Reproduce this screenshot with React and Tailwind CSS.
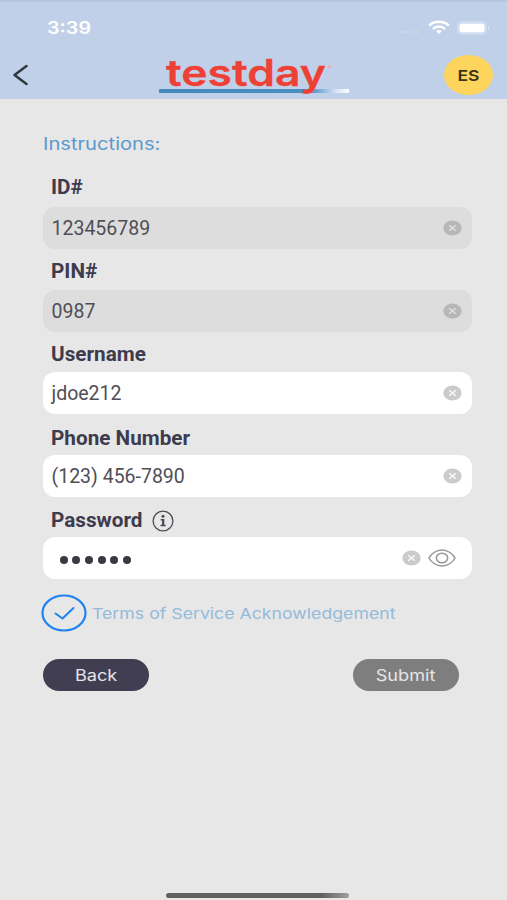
const fields = [
  { label: 'ID#', value: '123456789', disabled: true, shift: 'pt-[2px]' },
  { label: 'PIN#', value: '0987', disabled: true, shift: 'pt-[4px]' },
  { label: 'Username', value: 'jdoe212', shift: 'pt-[5px]' },
  { label: 'Phone Number', value: '(123) 456-7890', shift: 'pt-[7px]' },
  { label: 'Password', value: '', secret: true, shift: 'pt-[7px]' },
]

const ClearIcon = ({ dark }) => (
  <svg className={dark ? 'text-[#b7b7b7]' : 'text-[#cbcbcb]'} width="19" height="16" viewBox="0 0 19 16">
    <ellipse cx="9.5" cy="8" rx="9.2" ry="7.6" fill="currentColor" />
    <path d="M6.2 5.2l6.6 5.6M12.8 5.2l-6.6 5.6" stroke={dark ? '#e0e0e0' : '#fafafa'} strokeWidth="1.5" />
  </svg>
)

const EyeIcon = () => (
  <svg width="28" height="18" viewBox="0 0 28 18" fill="none" stroke="#969696" strokeWidth="1.5">
    <path d="M1 9C3 5 8 1 14 1s11 4 13 8c-2 4-7 8-13 8S3 13 1 9z" />
    <ellipse cx="14" cy="9" rx="5.700" ry="4.700" />
  </svg>
)

const InfoIcon = () => (
  <svg width="22" height="22" viewBox="0 0 22 22" fill="none" stroke="#4b4b52">
    <circle cx="11" cy="11" r="9.900" strokeWidth="1.3" />
    <circle cx="11" cy="6.300" r="1.500" fill="#4b4b52" stroke="none" />
    <path d="M8.700 9.700h2.500v5.800" strokeWidth="1.500" />
    <path d="M11.200 9v6.500" strokeWidth="2.200" />
    <path d="M8.500 15.500h5.200" strokeWidth="1.500" />
  </svg>
)

const Logo = () => (
  <svg className="overflow-visible" width="192" height="46" viewBox="0 0 192 46">
    <defs>
      <linearGradient id="line" x1="0" x2="1" y1="0" y2="0">
        <stop offset="0" stopColor="#4389bd" />
        <stop offset="0.800" stopColor="#4a8fc4" />
        <stop offset="0.930" stopColor="#d3e2f1" />
        <stop offset="1" stopColor="#ffffff" />
      </linearGradient>
    </defs>
    <rect x="1" y="37" width="190" height="4" rx="1" fill="url(#line)" />
    <text x="8" y="34" textLength="160" lengthAdjust="spacingAndGlyphs" fontFamily="Inter, sans-serif" fontSize="37" fontWeight="600" fill="#ee4136" stroke="#ee4136" strokeWidth="0.3">testday</text>
    <circle cx="171.500" cy="14.500" r="1.500" fill="#eba9b0" />
  </svg>
)

const Header = () => (
  <header className="h-[99px] bg-[#c0d0e8] border-t-2 border-[#b5c5e0]">
    <div className="flex h-[50px] items-center justify-between pl-[47px] pr-[17px] text-white">
      <span className="mt-[4px] origin-left scale-x-[1.16] font-[Inter] text-[17px] font-semibold">3:39</span>
      <div className="flex items-center pt-[1px]">
        <div className="mt-2 mr-[9px] flex gap-[2px]">
          {[0, 1, 2, 3].map((i) => <i key={i} className="h-[2px] w-[3px] rounded-full bg-[#cddaed]" />)}
        </div>
        <svg width="22" height="15" viewBox="0 0 22 15" fill="none" stroke="white" strokeWidth="2.500">
          <path d="M1.200 5.500C6.500.400 15.500.400 20.800 5.500" />
          <path d="M5 8.900c3.400-3.300 8.600-3.300 12 0" />
          <path d="M8 11l3 3 3-3c-1.800-1.500-4.200-1.500-6 0z" fill="white" stroke="none" />
        </svg>
        <svg className="ml-[7px]" width="33" height="14" viewBox="0 0 33 14">
          <rect x="0.700" y="0.700" width="28.500" height="12.600" rx="4" fill="#cfdcef" stroke="#d3dff0" />
          <rect x="2.500" y="2.700" width="25" height="8.600" rx="2" fill="white" />
          <path d="M31 5q2 2 0 4z" fill="#e4ecf7" />
        </svg>
      </div>
    </div>
    <div className="flex h-[46px] items-center justify-between pl-[12px] pr-[14px]">
      <svg className="mr-[33px]" width="18" height="22" viewBox="0 0 18 22" fill="none" stroke="#30393f" strokeWidth="2.600" strokeLinecap="round" strokeLinejoin="round">
        <path d="M14.500 2L2.500 11l12 9" />
      </svg>
      <Logo />
      <button className="h-10 w-[49px] rounded-[50%] bg-[#fdd45c] font-[Inter] text-[#3a3217]">
        <span className="inline-block scale-x-[1.17] text-[15px] font-semibold">ES</span>
      </button>
    </div>
  </header>
)

const Field = ({ label, value, disabled, secret, shift }) => (
  <div className="h-[82.600px]">
    <label className={`flex h-[40.600px] items-center gap-[10px] pl-[8px] text-[20.500px] font-bold text-[#3d3b4d] ${shift}`}>
      <span className="origin-left scale-x-[1.01]">{label}</span>
      {secret && <InfoIcon />}
    </label>
    <div className={`flex h-[42px] items-center justify-between rounded-[12px] pl-[8.500px] ${disabled ? 'bg-[#dddddd]' : 'bg-white'} ${secret ? 'pr-[16px]' : 'pr-[10px]'}`}>
      {secret ? (
        <div className="flex gap-[4.500px] pt-[3px] pl-[8px]">
          {[0, 1, 2, 3, 4, 5].map((i) => <i key={i} className="h-[8.200px] w-[8.200px] rounded-full bg-[#3b3a43]" />)}
        </div>
      ) : (
        <span className="pt-[1px] text-[19.500px] text-[#4f4e56]">{value}</span>
      )}
      <div className="flex items-center gap-[7px]">
        <ClearIcon dark={disabled} />
        {secret && <EyeIcon />}
      </div>
    </div>
  </div>
)

export default function App() {
  return (
    <div className="flex h-[900px] w-[507px] flex-col bg-[#e7e7e7] font-[Roboto]">
      <Header />
      <main className="flex-1 pt-[33px] pr-[35px] pl-[43px]">
        <p className="h-[34.500px] font-[Inter] text-[17px] leading-[24px] text-[#5b98cb]">
          <span className="inline-block origin-left scale-x-[1.185]">Instructions:</span>
        </p>
        {fields.map((f) => <Field key={f.label} {...f} />)}
        <div className="mt-[15px] -ml-[2px] flex h-[38px] items-center gap-[5px] font-[Inter]">
          <svg width="46" height="38" viewBox="0 0 46 38" fill="none" stroke="#1f82f2" strokeLinecap="round" strokeLinejoin="round">
            <ellipse cx="23" cy="19" rx="21.500" ry="17.500" strokeWidth="2.200" />
            <path d="M14.500 19.500l7 5 11-10.500" strokeWidth="2" />
          </svg>
          <span className="origin-left scale-x-[1.18] pt-[2px] text-[15px] whitespace-nowrap text-[#94bbdb]">Terms of Service Acknowledgement</span>
        </div>
        <div className="mt-[27px] flex justify-between pr-[13px] font-[Inter] text-[15.500px] text-[#e5e5e8]">
          <button className="h-8 w-[106px] rounded-full bg-[#413e52]"><span className="inline-block scale-x-[1.17]">Back</span></button>
          <button className="h-8 w-[106px] rounded-full bg-[#7e7e7e]"><span className="inline-block scale-x-[1.17]">Submit</span></button>
        </div>
      </main>
      <div className="mx-auto mb-[2px] h-[5px] w-[183px] translate-x-[4px] rounded-full bg-linear-to-r from-[#606060] from-85% to-[#a0a0a0]" />
    </div>
  )
}
